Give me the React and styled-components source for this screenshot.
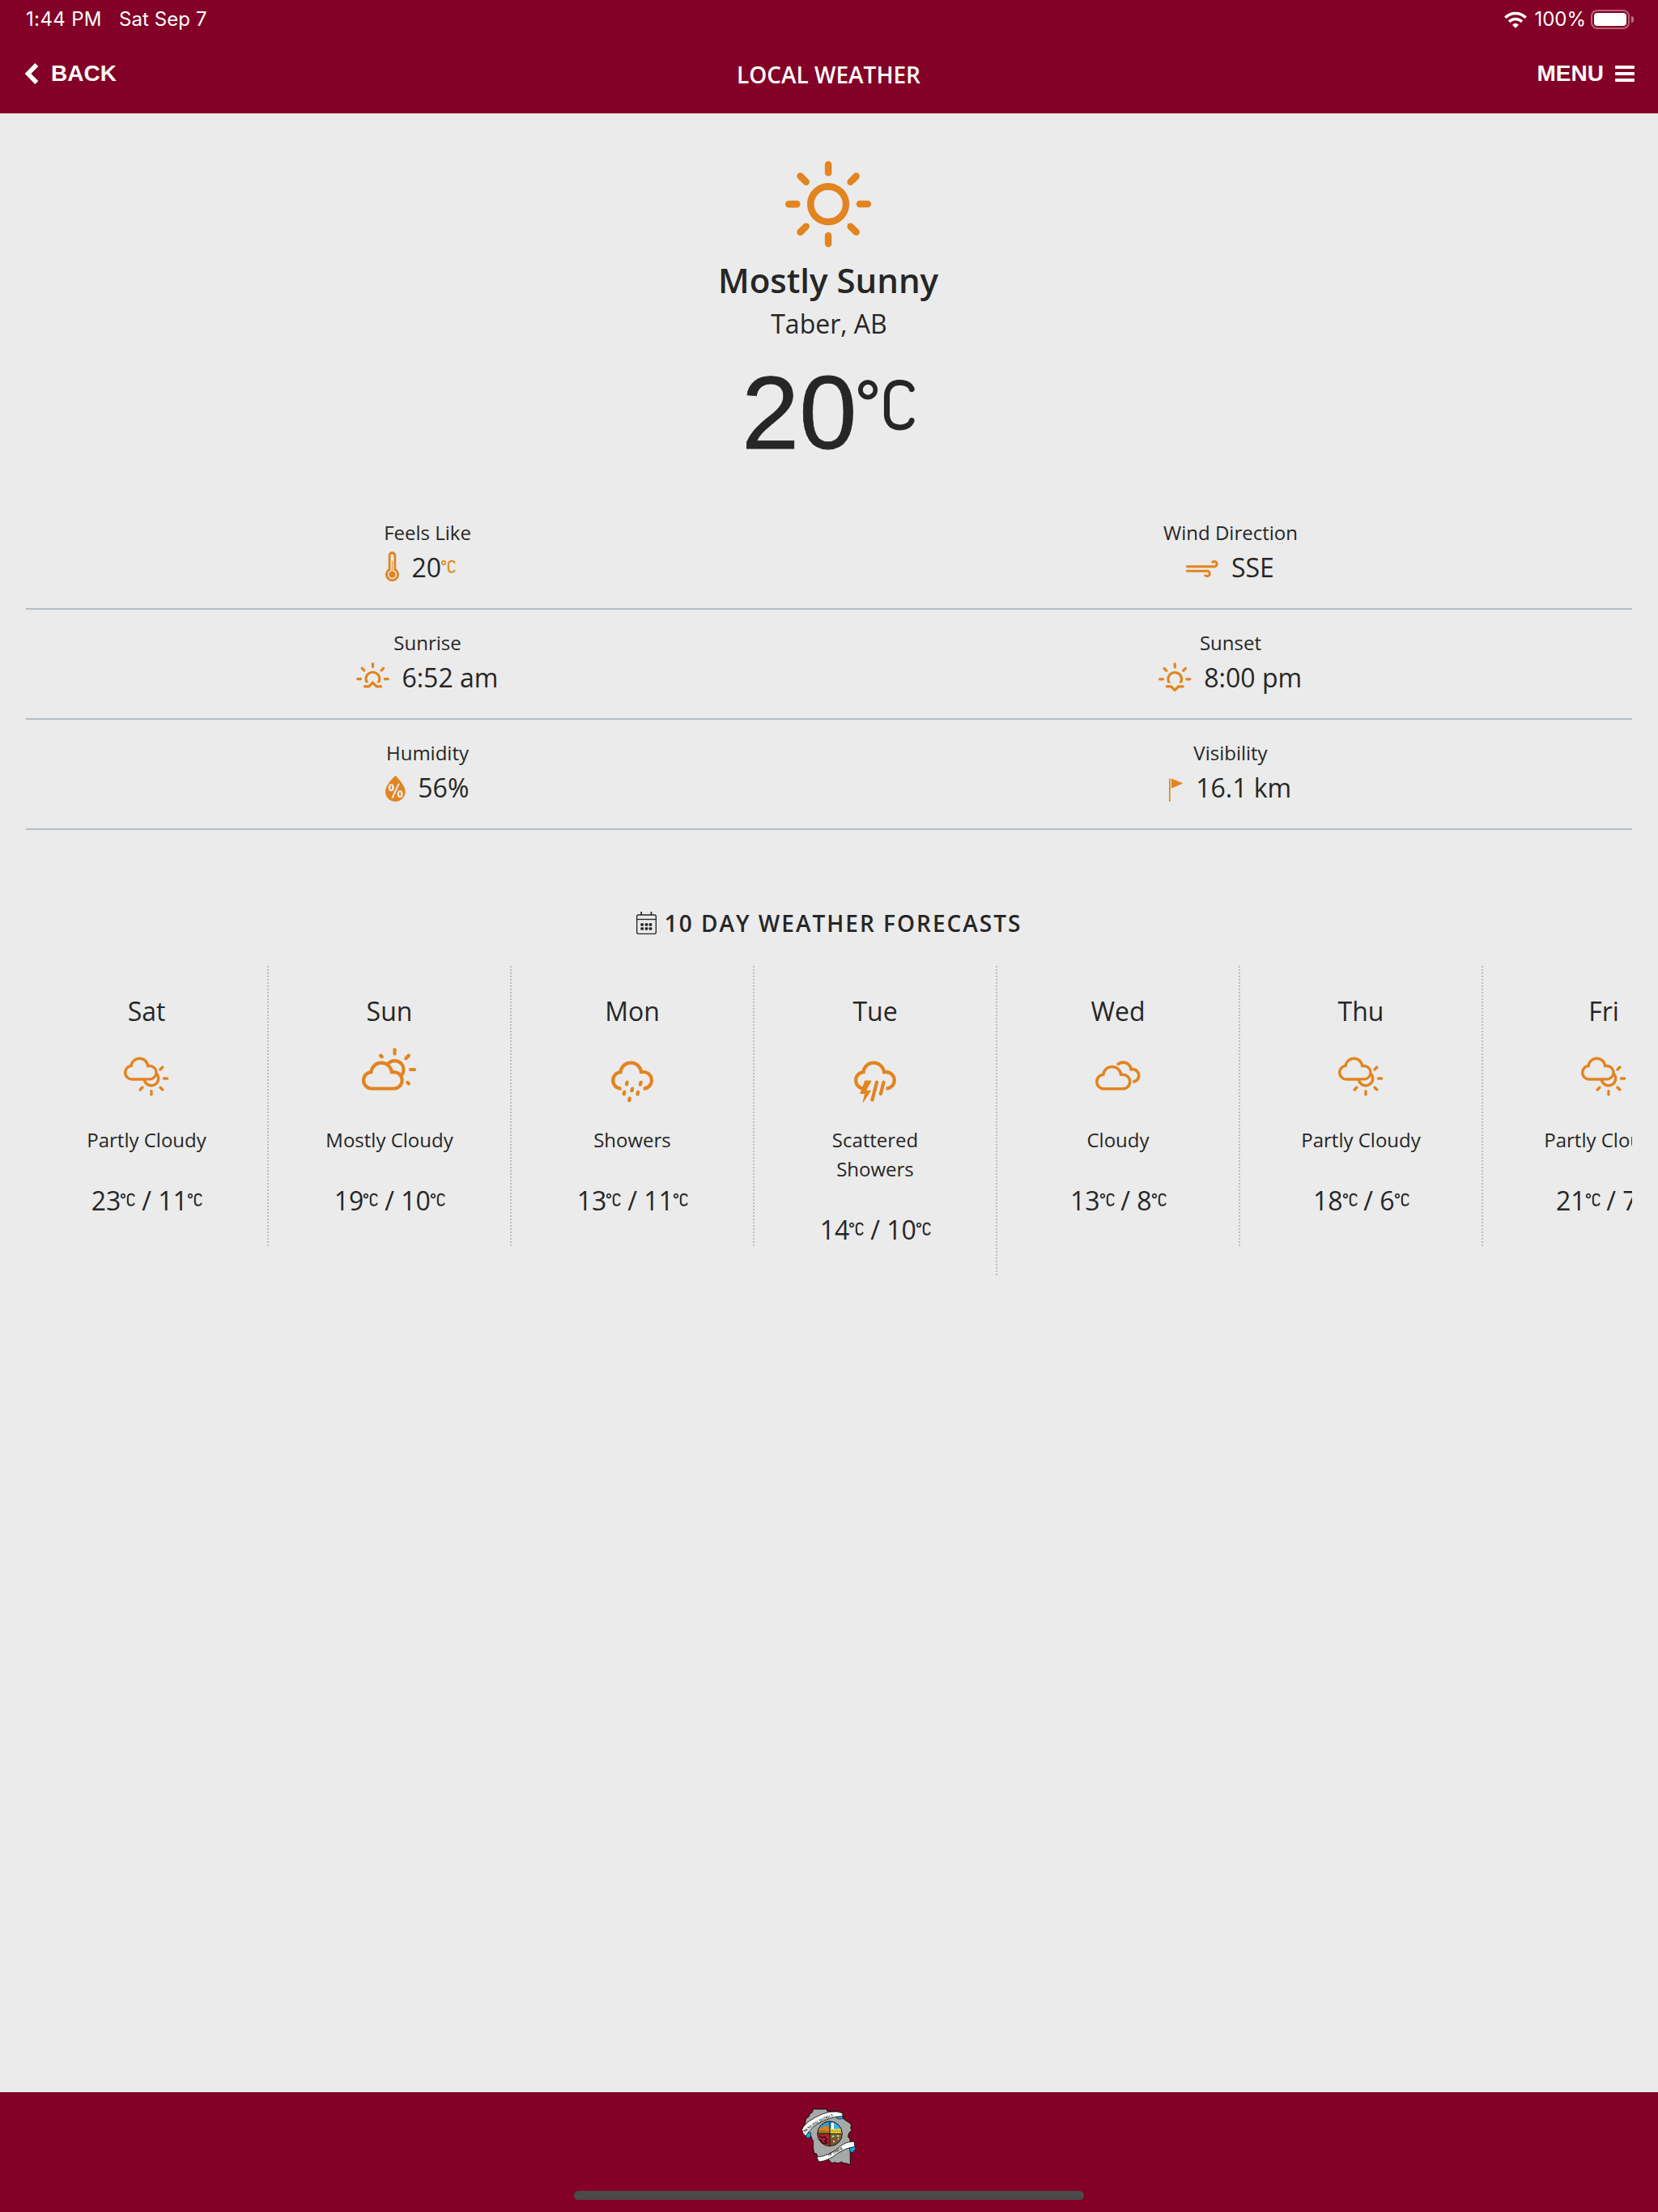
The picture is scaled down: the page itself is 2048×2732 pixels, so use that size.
import React from "react";
import styled, { createGlobalStyle } from "styled-components";
import {
  WiDaySunny,
  WiThermometer,
  WiStrongWind,
  WiSunrise,
  WiSunset,
  WiHumidity,
  WiSmallCraftAdvisory,
  WiDayCloudyHigh,
  WiDayCloudy,
  WiShowers,
  WiThunderstorm,
  WiCloudy,
  WiCelsius,
} from "react-icons/wi";

const color = {
  brand: "#830026",
  page: "#ebebeb",
  ink: "#262626",
  accent: "#e2841f",
  rule: "#b5bec6",
};

const GlobalStyle = createGlobalStyle`
  *, *::before, *::after { box-sizing: border-box; }
  body {
    margin: 0;
    background: ${color.page};
    color: ${color.ink};
    font-family: "Open Sans", "Noto Sans", sans-serif;
  }
`;

const Screen = styled.div`
  display: flex;
  flex-direction: column;
  width: 2048px;
  height: 2732px;
  overflow: hidden;
  background: ${color.page};
`;

/* ---------- header ---------- */

const Header = styled.header`
  flex: none;
  height: 140px;
  background: ${color.brand};
  color: #fff;
`;

const StatusBar = styled.div`
  display: flex;
  align-items: center;
  justify-content: space-between;
  height: 48px;
  padding: 0 30px 0 32px;
  font: 400 24px/48px Inter, sans-serif;
`;

const StatusGroup = styled.div`
  display: flex;
  align-items: center;
  gap: ${(p) => p.$gap}px;
`;

const StatusText = styled.span`
  letter-spacing: ${(p) => p.$track || 0}px;
`;

const Battery = styled.span`
  display: flex;
  width: 48px;
  height: 24px;
  padding: 2px;
  border: 2px solid rgba(255, 255, 255, 0.4);
  border-radius: 8px;

  &::before {
    content: "";
    flex: 1;
    border-radius: 4px;
    background: #fff;
  }
`;

const BatteryTip = styled.span`
  width: 3px;
  height: 8px;
  margin-left: 2px;
  border-radius: 0 4px 4px 0;
  background: rgba(255, 255, 255, 0.45);
`;

const BatteryGroup = styled.span`
  display: flex;
  align-items: center;
  margin-left: -3px;
`;

const NavBar = styled.nav`
  display: grid;
  grid-template-columns: 1fr auto 1fr;
  align-items: center;
  height: 88px;
  padding: 0 29px 0 31px;
`;

const NavLink = styled.a`
  display: flex;
  align-items: center;
  justify-self: ${(p) => p.$side};
  gap: ${(p) => (p.$side === "start" ? 16 : 14)}px;
  height: 32px;
  margin-bottom: 2px;
  font: 700 28px/32px "Liberation Sans", Arial, sans-serif;
`;

const NavTitle = styled.h1`
  margin: 0;
  padding-right: 3px;
  font-size: 28px;
  font-weight: 600;
  line-height: 42px;
`;

const MenuBars = styled.span`
  display: flex;
  flex-direction: column;
  gap: 4px;
  width: 24px;

  i {
    height: 4px;
    border-radius: 1px;
    background: #fff;
  }
`;

/* ---------- current conditions ---------- */

const Main = styled.main`
  flex: 1;
  padding: 59px 32px 0;
  overflow: hidden;
`;

const Current = styled.section`
  display: flex;
  flex-direction: column;
  align-items: center;
`;

const SunBadge = styled.span`
  display: flex;
  padding-right: 2px;
  color: ${color.accent};
`;

const Condition = styled.h2`
  margin: 10px 0 0;
  padding-right: 2px;
  font-size: 42px;
  font-weight: 600;
  line-height: 61px;
`;

const Place = styled.p`
  margin: 0;
  font-size: 32px;
  line-height: 48px;
`;

const BigTemp = styled.div`
  display: flex;
  align-items: flex-start;
  gap: 2px;
  height: 143px;
  margin-top: 14px;
  padding-right: 2px;
  font: 400 128px/143px "Liberation Sans", Arial, sans-serif;
  -webkit-text-stroke: 0.8px currentColor;
`;

const Degree = styled.span`
  display: flex;
  padding-top: ${(p) => p.$top}px;
  color: ${(p) => (p.$accent ? color.accent : "inherit")};
`;

/* ---------- details ---------- */

const Details = styled.section`
  margin-top: 36px;
`;

const DetailRow = styled.div`
  display: grid;
  grid-template-columns: 1fr 1fr;
  height: 136px;
  padding-top: 23px;
  border-bottom: 2px solid ${color.rule};
`;

const Detail = styled.div`
  display: flex;
  flex-direction: column;
  align-items: center;
`;

const DetailLabel = styled.span`
  font-size: 24px;
  line-height: 36px;
`;

const DetailValue = styled.div`
  display: flex;
  align-items: flex-start;
  font-size: 32px;
  line-height: 50px;
  padding-right: ${(p) => (p.$unit ? 17 : 0)}px;
`;

const DetailIcon = styled.span`
  display: flex;
  margin: 1px 16px 0 -1px;
  color: ${color.accent};
`;

/* ---------- forecast ---------- */

const ForecastTitle = styled.h3`
  display: flex;
  align-items: center;
  justify-content: center;
  gap: 10px;
  margin: 94px 0 32px;
  font-size: 28px;
  font-weight: 600;
  letter-spacing: 2px;
  line-height: 42px;
`;

const Strip = styled.section`
  display: flex;
  align-items: flex-start;
  overflow: hidden;
`;

const Day = styled.article`
  flex: none;
  display: flex;
  flex-direction: column;
  align-items: center;
  width: 300px;
  padding: 32px 50px 32px 48px;
  background: repeating-linear-gradient(${color.rule} 0 2px, transparent 2px 4px) right top / 2px 100% no-repeat;
`;

const DayName = styled.span`
  font-size: 32px;
  line-height: 48px;
`;

const DayIcon = styled.span`
  display: flex;
  margin-top: 19px;
  color: ${color.accent};
`;

const DayText = styled.span`
  margin-top: 23px;
  font-size: 24px;
  line-height: 36px;
  text-align: center;
`;

const DayTemps = styled.div`
  display: flex;
  align-items: flex-start;
  margin-top: 33px;
  font-size: 32px;
  line-height: 48px;
  white-space: pre;
`;

/* ---------- footer ---------- */

const Footer = styled.footer`
  flex: none;
  display: flex;
  flex-direction: column;
  align-items: center;
  justify-content: space-between;
  height: 148px;
  padding: 20px 0 15px;
  background: ${color.brand};
`;

const HomeIndicator = styled.div`
  width: 630px;
  height: 11px;
  border-radius: 6px;
  background: #4b4b4b;
`;

/* ---------- icons ---------- */

const GlyphBox = styled.span`
  display: block;
  flex: none;
  width: ${(p) => p.$w}px;
  height: ${(p) => p.$h}px;

  svg {
    display: block;
    width: 100%;
    height: 100%;
    overflow: visible;
    stroke-width: ${(p) => p.$bold || 0};
  }
`;

/* Each glyph is trimmed to its own ink, [x, y, width, height] on a 30-unit grid. */
const glyphs = {
  sunny: [WiDaySunny, 4.37, 4, 21.24, 21.26],
  thermometer: [WiThermometer, 9.91, 0, 10.18, 30],
  wind: [WiStrongWind, 3.1, 0, 23.8, 30],
  sunrise: [WiSunrise, 2.75, 0, 24.5, 30],
  sunset: [WiSunset, 2.88, 0, 24.25, 30],
  humidity: [WiHumidity, 7.56, 0, 14.82, 30],
  flag: [WiSmallCraftAdvisory, 9.81, 0, 10.38, 30],
  partly: [WiDayCloudyHigh, 0.35, 0, 30, 30],
  mostly: [WiDayCloudy, 1.56, 0, 26.88, 30],
  showers: [WiShowers, 4.6, 0, 20.8, 30],
  storm: [WiThunderstorm, 4.63, 0, 20.76, 30],
  cloudy: [WiCloudy, 3.89, 0, 22.21, 30],
  celsius: [WiCelsius, 9.75, 9.12, 10.46, 9.36],
};

function Glyph({ name, size, bold }) {
  const [Icon, x, y, w, h] = glyphs[name];
  return (
    <GlyphBox $w={(w * size) / 30} $h={(h * size) / 30} $bold={bold}>
      <Icon viewBox={`${x} ${y} ${w} ${h}`} />
    </GlyphBox>
  );
}

function Celsius({ accent, top, size = 50 }) {
  return (
    <Degree $accent={accent} $top={top}>
      <Glyph name="celsius" size={size} bold={size > 50 ? 0 : 0.2} />
    </Degree>
  );
}

const WifiIcon = () => (
  <svg width="28" height="21" viewBox="171 40 84 63" fill="none" stroke="#fff" strokeWidth="10.5">
    <path d="M175 63.500A54 54 0 0 1 251 63.500" />
    <path d="M189 78.500A34 34 0 0 1 237 78.500" />
    <path d="M213 102L201 90Q213 79 225 90Z" fill="#fff" stroke="none" />
  </svg>
);

const ChevronIcon = () => (
  <svg width="16" height="26" viewBox="93 231 48 78" fill="#fff">
    <path d="M93 270L130 232L141 243L114 270L141 297L130 308Z" stroke="#fff" strokeWidth="2" strokeLinejoin="round" />
  </svg>
);

const CalendarIcon = () => (
  <svg width="25" height="28" viewBox="0 0 75 84" fill="none" stroke={color.ink} strokeWidth="4">
    <rect x="2" y="12" width="71" height="70" rx="6" />
    <path d="M2 28.500H73" />
    <path d="M18.500 0V12M55.500 0V12" strokeWidth="5" />
    <g fill={color.ink} stroke="none">
      {[43, 58].map((y) =>
        [16, 32, 47].map((x) => <rect key={`${x}-${y}`} x={x} y={y} width="11" height="10" rx="3" />)
      )}
    </g>
  </svg>
);

const Crest = () => (
  <svg width="68" height="71" viewBox="90 100 204 213">
    <defs>
      <path id="upper" d="M103 190Q150 147 218 127" />
      <clipPath id="seal">
        <circle cx="195" cy="194" r="45" />
      </clipPath>
    </defs>
    <path
      d="M133 103H184L185 111L238 112L243 136L251 143L262 150L275 160L272 172L276 182L267 190L262 204L270 215L271 309L258 304L246 303L238 298L226 303L212 300L203 303L192 291L150 282L146 268L137 266L133 244L134 222L129 214L124 200L110 192L104 152L107 138L118 130L121 120L131 114Z"
      fill="#a7a9a8"
      stroke="#111"
      strokeWidth="3"
    />
    <path d="M221 130L243 127L244 137L232 140L220 137Z" fill="#1ba4e0" stroke="#111" strokeWidth="2" />
    <path d="M104 197Q112 188 125 190L124 204Q117 213 109 209Z" fill="#1ba4e0" stroke="#111" strokeWidth="2" />
    <path
      d="M92 179Q96 160 138 135Q200 100 242 118L243 129Q195 130 150 158Q118 178 106 203Q94 194 92 179Z"
      fill="#fff"
      stroke="#111"
      strokeWidth="2.500"
    />
    <g clipPath="url(#seal)">
      <rect x="149" y="148" width="46" height="46" fill="#2a9fd0" />
      <path d="M149 182L158 170L168 172L176 163L190 166L196 178V194H149Z" fill="#dd7c22" />
      <path d="M149 186Q165 176 195 188V195H149Z" fill="#8a7a1e" />
      <rect x="195" y="148" width="46" height="46" fill="#37b0e6" />
      <path d="M195 176H241V194H195Z" fill="#f0d83a" />
      <path d="M200 178V158Q205 145 210 158V178Z" fill="#fff" />
      <path d="M199 184H240" stroke="#77661c" strokeWidth="8" strokeDasharray="2 4" />
      <rect x="149" y="194" width="46" height="46" fill="#b51f35" />
      <path d="M158 202l8 7 10-4 8 10-7 6 10 7M152 216l12 3 6 12 12-2" fill="none" stroke="#26060d" strokeWidth="4" />
      <rect x="195" y="194" width="46" height="46" fill="#7a7136" />
      <path d="M196 214L212 206L236 212L226 236H196Z" fill="#7b5230" />
      <path d="M204 204h6M222 202h7M207 222h6M224 214h5" stroke="#e6e0cf" strokeWidth="5" />
      <path d="M195 148V240M149 194H241" stroke="#111" strokeWidth="3" />
    </g>
    <circle cx="195" cy="194" r="46" fill="none" stroke="#111" strokeWidth="3" />
    <path d="M268 246L288 238L291 250L280 264L270 260Z" fill="#1ba4e0" stroke="#111" strokeWidth="2" />
    <path
      d="M146 281Q196 276 232 242Q256 222 285 223L288 242Q252 246 222 268Q190 294 155 298Z"
      fill="#fff"
      stroke="#111"
      strokeWidth="2.500"
    />
    <text fontFamily="Liberation Serif, serif" fontWeight="700" fontSize="15" fill="#111">
      <textPath href="#upper" textLength="122" lengthAdjust="spacingAndGlyphs">
        MUNICIPAL DISTRICT
      </textPath>
    </text>
    <text
      transform="translate(191 278) rotate(-27)"
      fontFamily="Liberation Serif, serif"
      fontWeight="700"
      fontSize="15"
      fill="#111"
      textLength="58"
      lengthAdjust="spacingAndGlyphs"
    >
      OF TABER
    </text>
  </svg>
);

const details = [
  [
    { label: "Feels Like", icon: "thermometer", value: "20", unit: true },
    { label: "Wind Direction", icon: "wind", value: "SSE" },
  ],
  [
    { label: "Sunrise", icon: "sunrise", value: "6:52 am" },
    { label: "Sunset", icon: "sunset", value: "8:00 pm" },
  ],
  [
    { label: "Humidity", icon: "humidity", value: "56%" },
    { label: "Visibility", icon: "flag", value: "16.1 km" },
  ],
];

const forecast = [
  { day: "Sat", icon: "partly", text: "Partly Cloudy", high: 23, low: 11 },
  { day: "Sun", icon: "mostly", text: "Mostly Cloudy", high: 19, low: 10 },
  { day: "Mon", icon: "showers", text: "Showers", high: 13, low: 11 },
  { day: "Tue", icon: "storm", text: "Scattered Showers", high: 14, low: 10 },
  { day: "Wed", icon: "cloudy", text: "Cloudy", high: 13, low: 8 },
  { day: "Thu", icon: "partly", text: "Partly Cloudy", high: 18, low: 6 },
  { day: "Fri", icon: "partly", text: "Partly Cloudy", high: 21, low: 7 },
];

export default function App() {
  return (
    <Screen>
      <GlobalStyle />
      <Header>
        <StatusBar>
          <StatusGroup $gap={21}>
            <StatusText $track={0.35}>1:44 PM</StatusText>
            <StatusText $track={0.1}>Sat Sep 7</StatusText>
          </StatusGroup>
          <StatusGroup $gap={9}>
            <WifiIcon />
            <StatusText>100%</StatusText>
            <BatteryGroup>
              <Battery />
              <BatteryTip />
            </BatteryGroup>
          </StatusGroup>
        </StatusBar>
        <NavBar>
          <NavLink $side="start">
            <ChevronIcon />
            BACK
          </NavLink>
          <NavTitle>LOCAL WEATHER</NavTitle>
          <NavLink $side="end">
            MENU
            <MenuBars>
              <i />
              <i />
              <i />
            </MenuBars>
          </NavLink>
        </NavBar>
      </Header>

      <Main>
        <Current>
          <SunBadge>
            <Glyph name="sunny" size={150} />
          </SunBadge>
          <Condition>Mostly Sunny</Condition>
          <Place>Taber, AB</Place>
          <BigTemp>
            20
            <Celsius top={31} size={200} />
          </BigTemp>
        </Current>

        <Details>
          {details.map((row) => (
            <DetailRow key={row[0].label}>
              {row.map((d) => (
                <Detail key={d.label}>
                  <DetailLabel>{d.label}</DetailLabel>
                  <DetailValue $unit={d.unit}>
                    <DetailIcon>
                      <Glyph name={d.icon} size={50} />
                    </DetailIcon>
                    {d.value}
                    {d.unit && <Celsius accent top={16} />}
                  </DetailValue>
                </Detail>
              ))}
            </DetailRow>
          ))}
        </Details>

        <ForecastTitle>
          <CalendarIcon />
          10 DAY WEATHER FORECASTS
        </ForecastTitle>
        <Strip>
          {forecast.map((f) => (
            <Day key={f.day}>
              <DayName>{f.day}</DayName>
              <DayIcon>
                <Glyph name={f.icon} size={75} />
              </DayIcon>
              <DayText>{f.text}</DayText>
              <DayTemps>
                {f.high}
                <Celsius top={15} />
                {" / "}
                {f.low}
                <Celsius top={15} />
              </DayTemps>
            </Day>
          ))}
        </Strip>
      </Main>

      <Footer>
        <Crest />
        <HomeIndicator />
      </Footer>
    </Screen>
  );
}
